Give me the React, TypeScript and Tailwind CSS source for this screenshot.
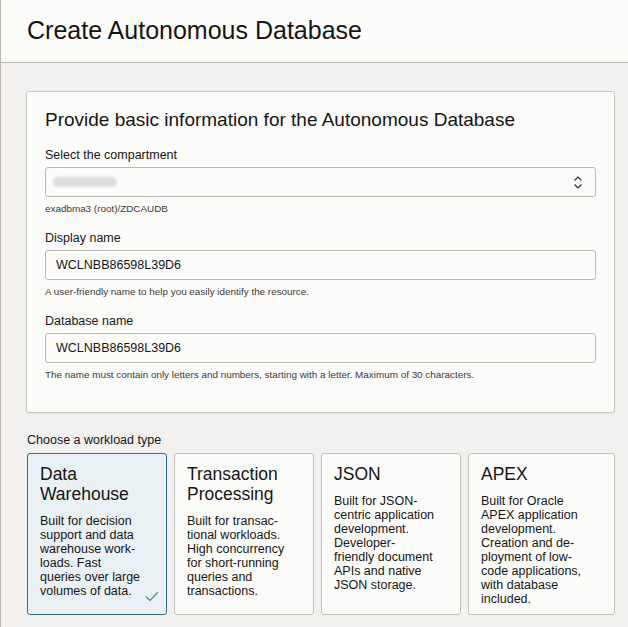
export default function App() {
  const workloads = [
    {
      title: "Data\nWarehouse",
      text: "Built for decision\nsupport and data\nwarehouse work-\nloads. Fast\nqueries over large\nvolumes of data.",
      selected: true,
    },
    {
      title: "Transaction\nProcessing",
      text: "Built for transac-\ntional workloads.\nHigh concurrency\nfor short-running\nqueries and\ntransactions.",
      selected: false,
    },
    {
      title: "JSON",
      text: "Built for JSON-\ncentric application\ndevelopment.\nDeveloper-\nfriendly document\nAPIs and native\nJSON storage.",
      selected: false,
    },
    {
      title: "APEX",
      text: "Built for Oracle\nAPEX application\ndevelopment.\nCreation and de-\nployment of low-\ncode applications,\nwith database\nincluded.",
      selected: false,
    },
  ]

  return (
    <div
      className="min-h-screen border-l border-[#bab7b3] bg-[#f2f1f0] text-[#161513]"
      style={{ fontFamily: '"Liberation Sans", Arial, sans-serif' }}
    >
      {/* Header */}
      <div className="h-[63px] border-b border-[#bab7b3] bg-[#fcfcfb] pl-[26px] pt-[15px]">
        <h1 className="text-[25px] leading-[30px]">Create Autonomous Database</h1>
      </div>

      <div className="pl-[25px] pr-[13px] pt-[28px]">
        {/* Basic info card */}
        <div className="rounded-[3px] border border-[#c9c6c2] bg-[#fcfcfb] px-[18px] pt-[16px] pb-[30px] shadow-[0_1px_2px_rgba(0,0,0,0.06)]">
          <h2 className="text-[19px] leading-[24px]">Provide basic information for the Autonomous Database</h2>

          <label className="mt-[15px] block text-[12.5px] leading-[16px]">Select the compartment</label>
          <div className="mt-1 flex h-[30px] items-center justify-between rounded-[3px] border border-[#bcb8b4] bg-[#fcfcfb] pl-[7px] pr-[12px]">
            <div className="h-[10px] w-[64px] rounded-full bg-[#dddbd9] blur-[1.5px]" />
            <svg width="10" height="15" viewBox="0 0 10 15" fill="none" stroke="#2b2926" strokeWidth="1.2">
              <path d="M1.5 5.5 L5 2 L8.5 5.5" />
              <path d="M1.5 9.5 L5 13 L8.5 9.5" />
            </svg>
          </div>
          <p className="mt-[5px] text-[9.9px] leading-[14px] text-[#3d3935]">exadbma3 (root)/ZDCAUDB</p>

          <label className="mt-[14px] block text-[12.5px] leading-[16px]">Display name</label>
          <div className="mt-1 flex h-[30px] items-center rounded-[3px] border border-[#bcb8b4] bg-[#fcfcfb] pl-[10px] text-[12.5px]">
            WCLNBB86598L39D6
          </div>
          <p className="mt-[5px] text-[9.9px] leading-[14px] text-[#3d3935]">
            A user-friendly name to help you easily identify the resource.
          </p>

          <label className="mt-[14px] block text-[12.5px] leading-[16px]">Database name</label>
          <div className="mt-1 flex h-[30px] items-center rounded-[3px] border border-[#bcb8b4] bg-[#fcfcfb] pl-[10px] text-[12.5px]">
            WCLNBB86598L39D6
          </div>
          <p className="mt-[5px] text-[9.9px] leading-[14px] text-[#3d3935]">
            The name must contain only letters and numbers, starting with a letter. Maximum of 30 characters.
          </p>
        </div>

        {/* Workload type */}
        <p className="mt-[19px] pl-px text-[12.5px] leading-[16px]">Choose a workload type</p>
        <div className="mt-[5px] grid grid-cols-[140px_140px_140px_1fr] gap-[7px] pl-px">
          {workloads.map((w) => (
            <div
              key={w.title}
              className={
                w.selected
                  ? "relative h-[162px] rounded-[3px] border border-[#2f6b93] bg-[#e9f1f5] px-[12px] pt-[10px]"
                  : "relative h-[162px] rounded-[3px] border border-[#c4c0bc] bg-[#fcfcfb] px-[12px] pt-[10px]"
              }
            >
              <div className="whitespace-pre-line text-[17.5px] leading-[20px]">{w.title}</div>
              <div className="mt-[10px] whitespace-pre-line text-[12.5px] leading-[14px]">{w.text}</div>
              {w.selected && (
                <svg
                  className="absolute right-[7px] bottom-[12px]"
                  width="14"
                  height="11"
                  viewBox="0 0 14 11"
                  fill="none"
                  stroke="#5b8aa6"
                  strokeWidth="1.3"
                >
                  <path d="M1 5.5 L5 9.5 L13 1" />
                </svg>
              )}
            </div>
          ))}
        </div>
      </div>
    </div>
  )
}
